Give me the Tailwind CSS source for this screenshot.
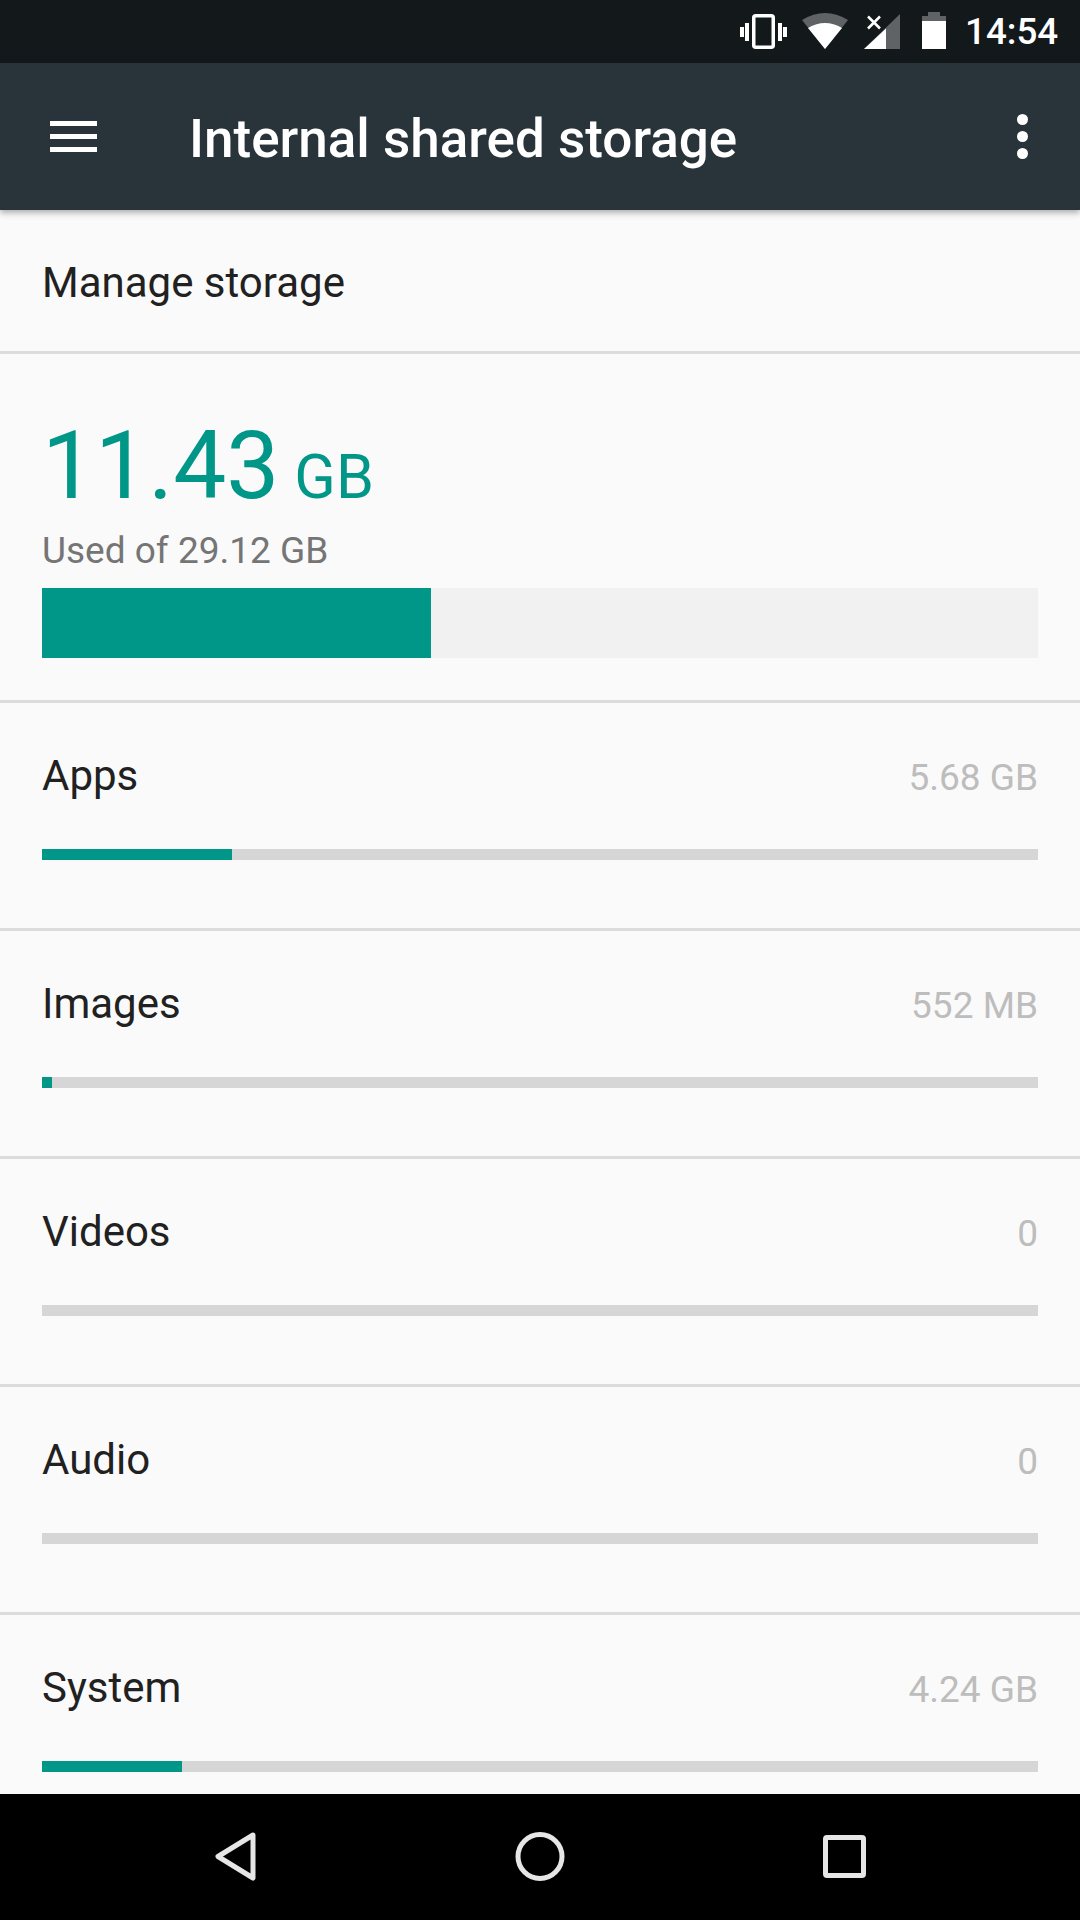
<!DOCTYPE html>
<html lang="en">
<head>
    <meta charset="UTF-8">
    <meta name="viewport" content="width=device-width, initial-scale=1.0">
    <title>Internal shared storage</title>
    <script src="https://cdn.jsdelivr.net/npm/@tailwindcss/browser@4"></script>
</head>
<body class="[font-family:Roboto,sans-serif] bg-[#fafafa]">
    <div class="w-[1080px] h-[1920px] flex flex-col overflow-hidden">
        <!-- Status bar -->
        <div class="h-[63px] shrink-0 bg-[#13181b] relative">
            <svg class="absolute left-[738px] top-0" width="230" height="63" viewBox="738 0 230 63">
                <!-- vibrate -->
                <rect x="740" y="27" width="4" height="10" fill="#fff"/>
                <rect x="745" y="23" width="4" height="18" fill="#fff"/>
                <rect x="753.750" y="15.750" width="19.500" height="31.500" rx="2" fill="none" stroke="#fff" stroke-width="3.500"/>
                <rect x="778" y="23" width="4" height="18" fill="#fff"/>
                <rect x="783" y="27" width="4" height="10" fill="#fff"/>
                <!-- wifi -->
                <path d="M802 20 Q825 6 848 20 L825 49 Z" fill="#5f6365"/>
                <path d="M808 28 Q825 18 842 28 L825 49 Z" fill="#fff"/>
                <!-- signal -->
                <path d="M900 14 V49 H864 Z" fill="#5f6365"/>
                <path d="M886 28.500 V49 H864 Z" fill="#fff"/>
                <path d="M868 16.500 L880 28.500 M880 16.500 L868 28.500" stroke="#fff" stroke-width="2.500" fill="none"/>
                <!-- battery -->
                <path d="M928 16 V12 H940 V16 H946 V49 H922 V16 Z" fill="#fff"/>
                <path d="M928 16 V12 H940 V16 H946 V21 H922 V16 Z" fill="#5f6365"/>
            </svg>
            <span class="absolute left-[965px] top-[11px] text-[36.750px] leading-[42px] font-medium text-white">14:54</span>
        </div>

        <!-- Toolbar -->
        <div class="h-[147px] shrink-0 bg-[#29343a] flex items-center relative z-10 shadow-[0_3px_6px_rgba(0,0,0,0.3)]">
            <div class="w-[189px] shrink-0 pl-[50px]">
                <div class="w-[47px] flex flex-col gap-[8px]">
                    <div class="h-[5px] bg-white"></div>
                    <div class="h-[5px] bg-white"></div>
                    <div class="h-[5px] bg-white"></div>
                </div>
            </div>
            <h1 class="flex-1 pt-[4px] text-[53px] leading-[60px] font-medium text-white">Internal shared storage</h1>
            <div class="w-[116px] flex flex-col items-center gap-[6px]">
                <div class="w-[11px] h-[11px] rounded-full bg-white"></div>
                <div class="w-[11px] h-[11px] rounded-full bg-white"></div>
                <div class="w-[11px] h-[11px] rounded-full bg-white"></div>
            </div>
        </div>

        <!-- Content -->
        <div class="flex-1 overflow-hidden">
            <div class="h-[141px] pl-[42px] pt-[4px] flex items-center text-[42px] text-[#212121]">Manage storage</div>
            <div class="h-[3px] bg-[#dcdcdc]"></div>

            <div class="h-[346px] px-[42px]">
                <div class="pt-[62px] h-[152px] flex items-baseline text-[#009688]">
                    <span class="text-[94.500px] leading-[100px]">11.43</span>
                    <span class="text-[61px] leading-[100px] ml-[15px]">GB</span>
                </div>
                <div class="mt-[23px] text-[37px] leading-[44px] text-[#757575]">Used of 29.12 GB</div>
                <div class="mt-[15px] h-[70px] bg-[#f1f1f1]">
                    <div class="w-[389px] h-full bg-[#009688]"></div>
                </div>
            </div>
            <div class="h-[3px] bg-[#dcdcdc]"></div>

            <div class="h-[225px] px-[42px] pt-[47px]">
                <div class="flex justify-between items-baseline h-[50px]">
                    <span class="text-[42px] leading-[50px] text-[#212121]">Apps</span>
                    <span class="text-[37px] text-[#bdbdbd]">5.68 GB</span>
                </div>
                <div class="mt-[49px] h-[11px] bg-[#d6d6d6]"><div class="w-[190px] h-full bg-[#009688]"></div></div>
            </div>
            <div class="h-[3px] bg-[#dcdcdc]"></div>

            <div class="h-[225px] px-[42px] pt-[47px]">
                <div class="flex justify-between items-baseline h-[50px]">
                    <span class="text-[42px] leading-[50px] text-[#212121]">Images</span>
                    <span class="text-[37px] text-[#bdbdbd]">552 MB</span>
                </div>
                <div class="mt-[49px] h-[11px] bg-[#d6d6d6]"><div class="w-[10px] h-full bg-[#009688]"></div></div>
            </div>
            <div class="h-[3px] bg-[#dcdcdc]"></div>

            <div class="h-[225px] px-[42px] pt-[47px]">
                <div class="flex justify-between items-baseline h-[50px]">
                    <span class="text-[42px] leading-[50px] text-[#212121]">Videos</span>
                    <span class="text-[37px] text-[#bdbdbd]">0</span>
                </div>
                <div class="mt-[49px] h-[11px] bg-[#d6d6d6]"></div>
            </div>
            <div class="h-[3px] bg-[#dcdcdc]"></div>

            <div class="h-[225px] px-[42px] pt-[47px]">
                <div class="flex justify-between items-baseline h-[50px]">
                    <span class="text-[42px] leading-[50px] text-[#212121]">Audio</span>
                    <span class="text-[37px] text-[#bdbdbd]">0</span>
                </div>
                <div class="mt-[49px] h-[11px] bg-[#d6d6d6]"></div>
            </div>
            <div class="h-[3px] bg-[#dcdcdc]"></div>

            <div class="h-[225px] px-[42px] pt-[47px]">
                <div class="flex justify-between items-baseline h-[50px]">
                    <span class="text-[42px] leading-[50px] text-[#212121]">System</span>
                    <span class="text-[37px] text-[#bdbdbd]">4.24 GB</span>
                </div>
                <div class="mt-[49px] h-[11px] bg-[#d6d6d6]"><div class="w-[140px] h-full bg-[#009688]"></div></div>
            </div>
        </div>

        <!-- Navigation bar -->
        <div class="h-[126px] shrink-0 bg-black relative">
            <svg class="absolute left-0 top-0" width="1080" height="126" viewBox="0 0 1080 126">
                <path d="M253 41 L218 62.500 L253 84 Z" fill="none" stroke="#e6e6e6" stroke-width="5" stroke-linejoin="round"/>
                <circle cx="540" cy="62.500" r="22" fill="none" stroke="#e6e6e6" stroke-width="5"/>
                <rect x="825.500" y="43.500" width="38" height="38" rx="1.500" fill="none" stroke="#e6e6e6" stroke-width="5"/>
            </svg>
        </div>
    </div>
</body>
</html>
